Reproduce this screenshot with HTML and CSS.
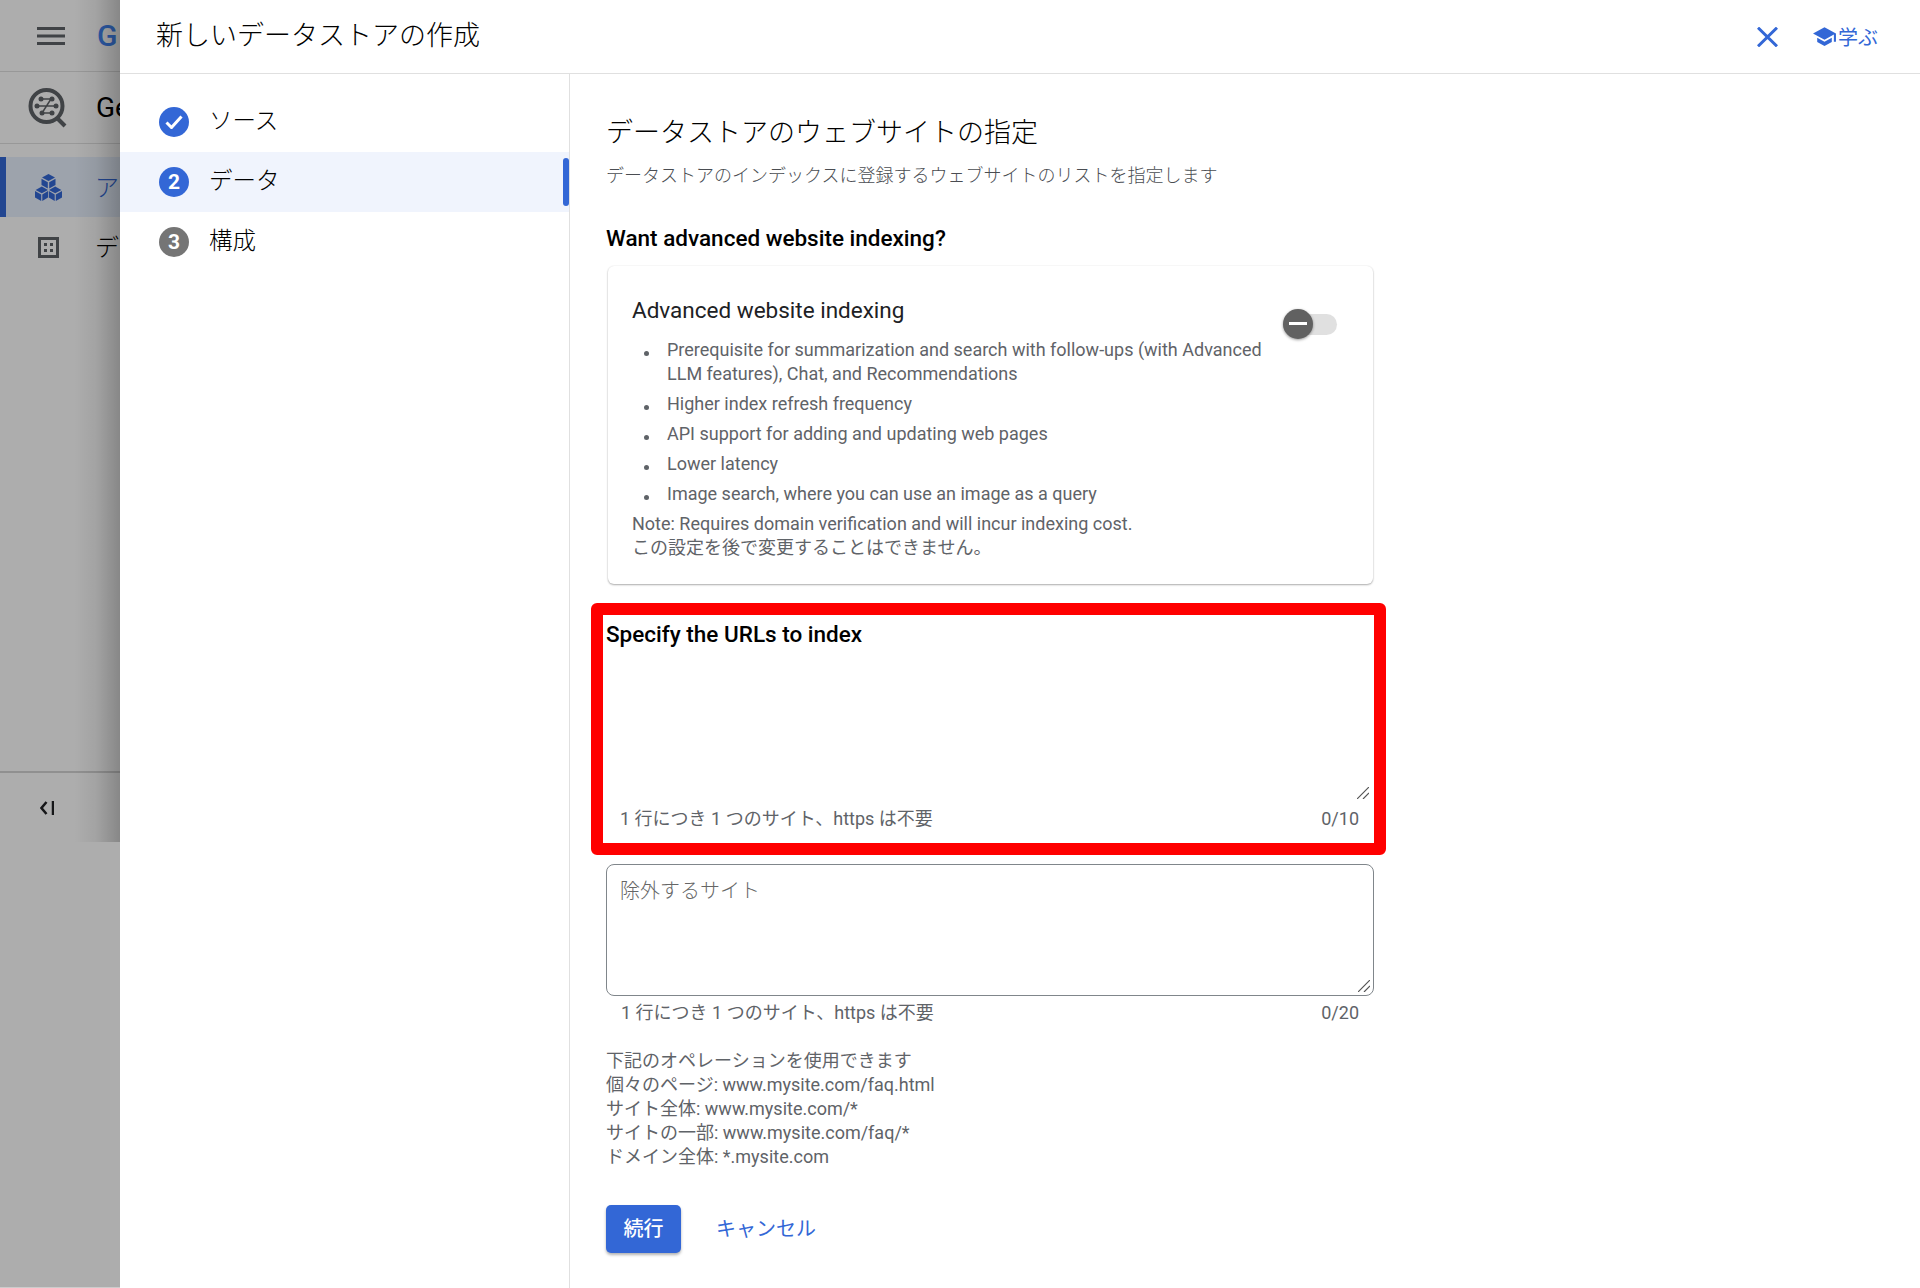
FILE: index.html
```html
<!DOCTYPE html>
<html lang="ja">
<head>
<meta charset="utf-8">
<title>新しいデータストアの作成</title>
<link rel="stylesheet" href="styles.css">
</head>
<body>
<div class="page">
  <aside class="backdrop">
    <nav class="nav">
      <div class="nav-top">
        <svg class="icon-menu" width="28" height="18" viewBox="0 0 28 18"><path d="M0 0h28v3H0zM0 7.500h28v3H0zM0 15h28v3H0z"/></svg>
        <span class="logo">G</span>
      </div>
      <div class="nav-product">
        <svg class="icon-product" width="40" height="42" viewBox="0 0 40 42">
          <circle cx="18.500" cy="19" r="16" class="ring"/>
          <path class="handle" d="M29 31l8 8"/>
          <path class="links" d="M13 12h10l-9 14h10M9 19h20"/>
          <circle cx="13" cy="12" r="2.500"/><circle cx="24" cy="12" r="2.500"/><circle cx="9" cy="19" r="2.500"/><circle cx="28" cy="19" r="2.500"/><circle cx="14" cy="26" r="2.500"/><circle cx="24" cy="26" r="2.500"/>
        </svg>
        <span class="product-name">Gen App Builder</span>
      </div>
      <a class="nav-item nav-item-active">
        <svg width="27" height="27" viewBox="0 0 27 27" class="icon-cubes">
          <path d="M13.500 0l6.500 3.500-6.500 3.500L7 3.500zM6.500 4.800l6.300 3.400v6.300L6.500 11zM20.500 4.800l-6.300 3.400v6.300l6.300-3.500z"/>
          <path d="M6.800 12.500l6.200 3.400-6.200 3.400L.6 15.900zM0 17.100l6.200 3.400V27L0 23.500zM13 17.100l-5.700 3.400V27l5.700-3.500z"/>
          <path d="M20.200 12.500l6.200 3.400-6.200 3.400L14 15.900zM13.800 17.100l5.900 3.400V27l-5.900-3.500zM27 17.100l-6.200 3.400V27l6.200-3.500z"/>
        </svg>
        <span>アプリ</span>
      </a>
      <a class="nav-item">
        <svg width="21" height="21" viewBox="0 0 21 21" class="icon-store"><path d="M0 0h21v21H0zM3 3v15h15V3z"/><path d="M6 6h3v3H6zM12 6h3v3h-3zM6 12h3v3H6zM12 12h3v3h-3z"/></svg>
        <span>データストア</span>
      </a>
      <div class="nav-foot">
        <svg width="14" height="14" viewBox="0 0 14 14" class="icon-collapse"><path d="M6.500 1L1.500 7l5 6"/><path d="M13 0v14"/></svg>
      </div>
    </nav>
  </aside>

  <section class="panel">
    <header class="panel-head">
      <h1 class="panel-title">新しいデータストアの作成</h1>
      <button class="close" aria-label="閉じる">
        <svg width="21" height="20" viewBox="0 0 21 20"><path d="M1 .7l19 18.600M20 .7L1 19.300"/></svg>
      </button>
      <a class="learn">
        <svg width="25" height="25" viewBox="0 0 24 24"><path d="M5 13.180v4L12 21l7-3.820v-4L12 17l-7-3.820zM12 3L1 9l11 6 9-4.910V17h2V9L12 3z"/></svg>
        <span>学ぶ</span>
      </a>
    </header>

    <div class="panel-body">
      <ol class="steps">
        <li class="step">
          <span class="step-num"><svg width="18" height="14" viewBox="0 0 18 14"><path d="M1.500 7.500l5 5L16.500 1.500"/></svg></span>
          <span class="step-label">ソース</span>
        </li>
        <li class="step step-active">
          <span class="step-num">2</span>
          <span class="step-label">データ</span>
        </li>
        <li class="step step-todo">
          <span class="step-num">3</span>
          <span class="step-label">構成</span>
        </li>
      </ol>

      <main class="content">
        <h2 class="heading">データストアのウェブサイトの指定</h2>
        <p class="sub">データストアのインデックスに登録するウェブサイトのリストを指定します</p>
        <h3 class="label label-first">Want advanced website indexing?</h3>

        <div class="card">
          <div class="card-text">
            <div class="card-title">Advanced website indexing</div>
            <ul class="features">
              <li>Prerequisite for summarization and search with follow-ups (with Advanced LLM features), Chat, and Recommendations</li>
              <li>Higher index refresh frequency</li>
              <li>API support for adding and updating web pages</li>
              <li>Lower latency</li>
              <li>Image search, where you can use an image as a query</li>
            </ul>
            <p class="note">Note: Requires domain verification and will incur indexing cost.<br>この設定を後で変更することはできません。</p>
          </div>
          <div class="toggle">
            <span class="toggle-thumb"></span>
          </div>
        </div>

        <div class="highlight">
          <h3 class="label">Specify the URLs to index</h3>
          <div class="field-wrap field-wrap-plain">
            <textarea class="field field-plain" aria-label="Specify the URLs to index"></textarea>
            <svg class="grip" width="12" height="12" viewBox="0 0 12 12"><path d="M0 12L12 0M6 12l6-6"/></svg>
          </div>
          <div class="hint"><span>1 行につき 1 つのサイト、https は不要</span><span>0/10</span></div>
        </div>

        <div class="field-wrap">
          <textarea class="field" placeholder="除外するサイト"></textarea>
          <svg class="grip" width="12" height="12" viewBox="0 0 12 12"><path d="M0 12L12 0M6 12l6-6"/></svg>
        </div>
        <div class="hint hint-exclude"><span>1 行につき 1 つのサイト、https は不要</span><span>0/20</span></div>

        <p class="ops">下記のオペレーションを使用できます<br>個々のページ: www.mysite.com/faq.html<br>サイト全体: www.mysite.com/*<br>サイトの一部: www.mysite.com/faq/*<br>ドメイン全体: *.mysite.com</p>

        <div class="actions">
          <button class="btn-primary">続行</button>
          <button class="btn-text">キャンセル</button>
        </div>
      </main>
    </div>
  </section>
</div>
</body>
</html>
```
FILE: styles.css
```css
* { box-sizing: border-box; }
html, body { margin: 0; height: 1288px; overflow: hidden; background: #fff; }
body { font-family: Roboto, "Noto Sans CJK JP", sans-serif; color: #202124; }
h1, h2, h3, p, ul, ol { margin: 0; padding: 0; font-weight: 400; }

.page { display: flex; height: 1288px; }

/* dimmed console behind the dialog */
.backdrop { position: relative; flex: 0 0 120px; height: 1288px; overflow: hidden; background: #fff; border-bottom: 1px solid #ccc; }
.backdrop::after {
  content: ""; position: absolute; inset: 0;
  background:
    linear-gradient(to right, rgba(0,0,0,0) 62%, rgba(0,0,0,.06) 80%, rgba(0,0,0,.22) 100%) top left / 100% 842px no-repeat,
    rgba(0,0,0,.32);
}
.nav { display: flex; flex-direction: column; width: 600px; height: 842px; }
.nav-top { display: flex; align-items: center; height: 72px; border-bottom: 1px solid #e0e0e0; padding: 0 0 0 37px; }
.icon-menu { fill: #5f6368; flex: none; }
.logo { margin-left: 32px; font-size: 30px; font-weight: 500; color: #4285f4; }
.nav-product { display: flex; align-items: center; height: 72px; border-bottom: 1px solid #e0e0e0; padding-left: 28px; }
.icon-product { fill: #5f6368; flex: none; }
.ring { fill: none; stroke: #5f6368; stroke-width: 4; }
.handle { fill: none; stroke: #5f6368; stroke-width: 4; }
.links { fill: none; stroke: #5f6368; stroke-width: 1.500; }
.product-name { margin-left: 28px; font-size: 28px; color: #000; }
.nav-item { display: flex; align-items: center; height: 60px; padding-left: 35px; font-size: 24px; font-weight: 300; color: #000; }
.nav-item span { margin-left: 33px; margin-bottom: 4px; }
.nav-item-active { margin-top: 13px; background: #e8f0fe; border-left: 6px solid #3367d6; padding-left: 29px; color: #3367d6; }
.icon-cubes { fill: #3367d6; flex: none; }
.icon-store { fill: #5f6368; flex: none; margin: 0 3px; }
.nav-foot { margin-top: auto; height: 71px; border-top: 2px solid #d4d4d4; padding: 28px 0 0 40px; }
.icon-collapse { display: block; fill: none; stroke: #202124; stroke-width: 2.500; }

/* dialog */
.panel { flex: 1; min-width: 0; display: flex; flex-direction: column; background: #fff; }
.panel-head { display: flex; align-items: center; flex: none; height: 74px; border-bottom: 1px solid #e0e0e0; padding: 0 42px 0 36px; }
.panel-title { flex: 1; height: 72px; font-size: 27px; line-height: 70px; color: #000; font-weight: 300; }
.close { display: flex; padding: 0; border: 0; background: none; margin-right: 34px; }
.close svg { fill: none; stroke: #3367d6; stroke-width: 3; }
.learn { display: flex; align-items: center; color: #3367d6; font-size: 20px; }
.learn svg { fill: #3367d6; margin-right: 1px; }

.panel-body { display: flex; flex: 1; min-height: 0; }
.steps { flex: 0 0 450px; list-style: none; padding-top: 18px; border-right: 1px solid #e0e0e0; }
.step { position: relative; display: flex; align-items: center; height: 60px; padding-left: 39px; font-size: 23.500px; color: #000; }
.step-label { margin-bottom: 7px; font-weight: 300; }
.step-num { flex: none; display: flex; align-items: center; justify-content: center; width: 30px; height: 30px; margin-right: 20px; border-radius: 50%; background: #3367d6; color: #fff; font-size: 21px; font-weight: 700; }
.step-num svg { fill: none; stroke: #fff; stroke-width: 3; }
.step-todo .step-num { background: #757575; }
.step-active { background: #f0f4fd; }
.step-active::after { content: ""; position: absolute; top: 6px; right: 0; width: 6px; height: 48px; border-radius: 3px; background: #3367d6; }

.content { width: 768px; margin-left: 36px; }
.heading { margin-top: 41px; font-size: 27px; line-height: 36px; color: #000; font-weight: 300; }
.sub { margin-top: 13px; font-size: 18px; line-height: 24px; color: #4a4d52; font-weight: 300; }
.label { font-size: 22.500px; line-height: 30px; font-weight: 500; color: #000; }
.label-first { margin-top: 35px; }

.card { display: flex; height: 318px; margin: 13px 1px 19px 2px; padding: 29px 36px 24px 24px; background: #fff; border-radius: 6px; box-shadow: 0 1px 2px rgba(0,0,0,.32), 0 0 2px rgba(0,0,0,.07); }
.card-text { flex: 1; min-width: 0; }
.card-title { font-size: 22.500px; line-height: 30px; color: #202124; }
.features { margin-top: 13px; padding-left: 35px; list-style: none; font-size: 18px; line-height: 24px; color: #5f6368; }
.features li { position: relative; margin-bottom: 6px; }
.features li::before { content: ""; position: absolute; left: -23px; top: 13px; width: 5px; height: 5px; border-radius: 50%; background: #5f6368; }
.note { font-size: 18px; line-height: 24px; color: #5f6368; }
.toggle { position: relative; flex: none; width: 54px; height: 21px; margin: 19px 0 0 13px; border-radius: 11px; background: #e0e0e0; }
.toggle-thumb { position: absolute; left: 0; top: -5px; width: 30px; height: 30px; border-radius: 50%; background: #616161; box-shadow: 0 1px 3px rgba(0,0,0,.4); }
.toggle-thumb::after { content: ""; position: absolute; left: 6px; top: 13px; width: 18px; height: 3px; background: #fff; }

.highlight { margin: 0 -12px 9px -15px; padding: 4px 1px 12px 3px; border: 12px solid #f00; border-radius: 6px; background: #fff; }
.field-wrap { position: relative; height: 132px; }
.field-wrap-plain { margin-top: 22px; }
.field { display: block; width: 100%; height: 132px; padding: 13px 13px; border: 1px solid #80868b; border-radius: 8px; background: #fff; font: 20px/27px Roboto, "Noto Sans CJK JP", sans-serif; color: #202124; outline: 0; resize: none; }
.field::placeholder { color: #666; font-weight: 300; }
.field-plain { border-color: transparent; }
.grip { position: absolute; right: 4px; bottom: 4px; fill: none; stroke: #555; stroke-width: 1.200; }
.hint { display: flex; justify-content: space-between; margin-top: 4px; padding: 0 15px; font-size: 18px; line-height: 24px; color: #5f6368; }
.highlight .hint { padding: 0 14px 0 14px; }
.hint-exclude { margin-top: 5px; }

.ops { margin-top: 24px; font-size: 18px; line-height: 24px; color: #5f6368; }
.actions { display: flex; align-items: center; margin-top: 36px; }
.btn-primary { width: 75px; height: 48px; padding: 0 0 3px; border: 0; border-radius: 5px; background: #3367d6; color: #fff; font: 500 20px Roboto, "Noto Sans CJK JP", sans-serif; box-shadow: 0 2px 3px rgba(0,0,0,.3); }
.btn-text { margin-left: 35px; padding: 0 0 3px; border: 0; background: none; color: #3367d6; font: 20px Roboto, "Noto Sans CJK JP", sans-serif; }
```
